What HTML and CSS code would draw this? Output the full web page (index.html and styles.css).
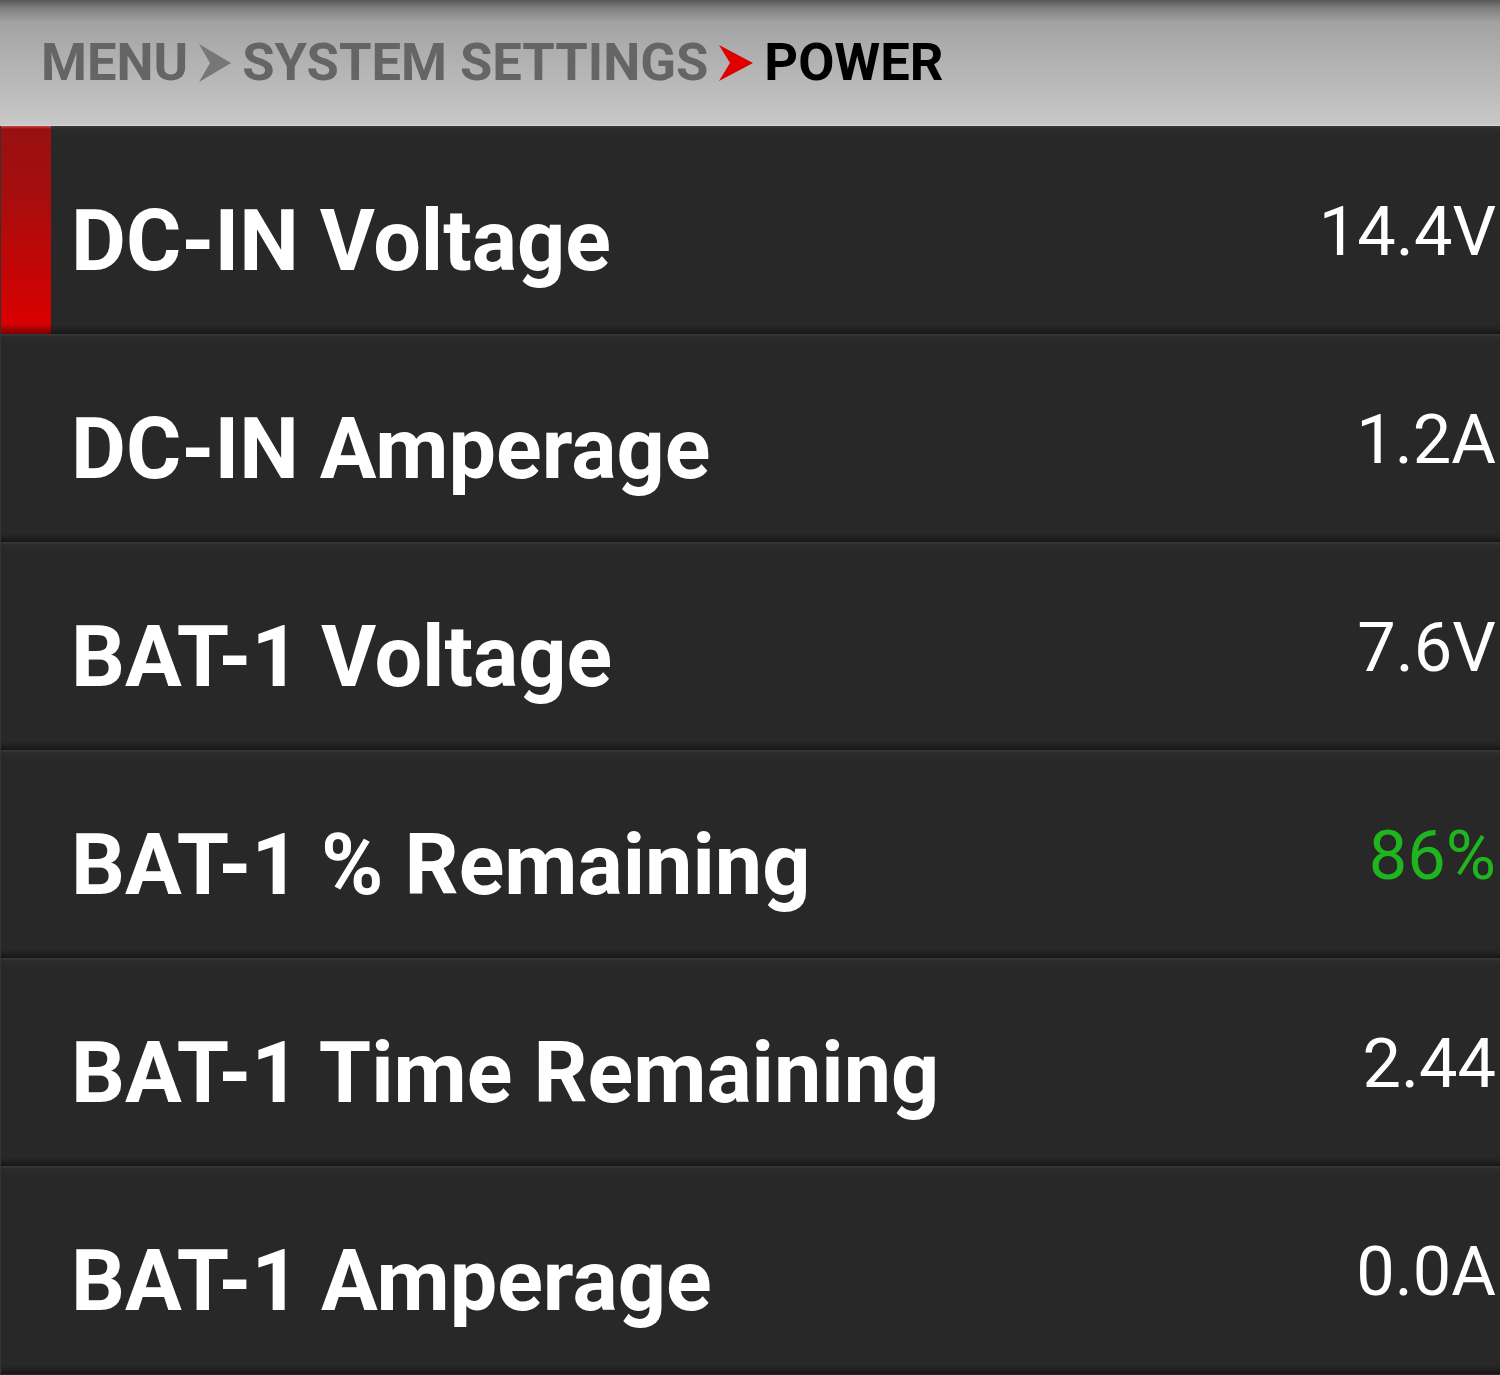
FILE: index.html
```html
<!DOCTYPE html>
<html>
	<head>
		<meta charset="utf-8">
		<meta name="viewport" content="width=device-width,initial-scale=1.0" />
		<title>Power</title>
		<link rel="stylesheet" href="styles.css">
	</head>
	<body>
		<div class="screen">
			<div class="crumbs">
				<span class="crumb">MENU</span>
				<svg class="sep" width="32" height="38" viewBox="0 0 32 38"><path d="M0 0 L32 19 L0 38 L11 19 Z" fill="#777"/></svg>
				<span class="crumb">SYSTEM SETTINGS</span>
				<svg class="sep" width="34" height="36" viewBox="0 0 34 36"><path d="M0 0 L34 18 L0 36 L11 18 Z" fill="#e00000"/></svg>
				<span class="crumb current">POWER</span>
			</div>
			<ul class="rows">
				<li class="row active"><span class="marker"></span><span class="label">DC-IN Voltage</span><span class="value">14.4V</span></li>
				<li class="row"><span class="marker"></span><span class="label">DC-IN Amperage</span><span class="value">1.2A</span></li>
				<li class="row"><span class="marker"></span><span class="label">BAT-1 Voltage</span><span class="value">7.6V</span></li>
				<li class="row"><span class="marker"></span><span class="label">BAT-1 % Remaining</span><span class="value good">86%</span></li>
				<li class="row"><span class="marker"></span><span class="label">BAT-1 Time Remaining</span><span class="value">2.44</span></li>
				<li class="row"><span class="marker"></span><span class="label">BAT-1 Amperage</span><span class="value">0.0A</span></li>
			</ul>
		</div>
	</body>
</html>
```

FILE: styles.css
```css
*{
	padding: 0;
	margin: 0;
	box-sizing: border-box;
}
body{
	background-color: #282828;
	font-family: Roboto, "Liberation Sans", sans-serif;
}
.screen{
	width: 1500px;
}
.crumbs{
	height: 126px;
	display: flex;
	align-items: center;
	gap: 11px;
	padding-left: 41px;
	border-bottom: 1px solid #d4d4d4;
	background: linear-gradient(to bottom, #575757 0, #7e7e7e 8px, #a2a2a2 22px, #acacac 45px, #bdbdbd 95px, #c8c8c8 124px);
}
.crumb{
	font-size: 52.5px;
	font-weight: 700;
	color: #656565;
	line-height: 1;
}
.crumb.current{
	color: #000;
}
.sep{
	display: block;
}
.rows{
	list-style: none;
}
.row{
	height: 208px;
	display: flex;
	align-items: center;
	padding-right: 4px;
	border-left: 1px solid #333;
	background: linear-gradient(to bottom, #3a3a3a 0, #2b2b2b 3px, #282828 10px, #282828 calc(100% - 9px), #1e1e1e calc(100% - 3px), #151515 100%);
}
.marker{
	width: 50px;
	height: 100%;
	flex-shrink: 0;
}
.row.active .marker{
	background: linear-gradient(to bottom, #c44 0, #991010 3px, #a50e0e 30%, #d80000 95%, #7a0000 100%);
}
.label{
	margin-left: 20px;
	padding-top: 24px;
	font-size: 84.5px;
	font-weight: 700;
	color: #fff;
	line-height: 1;
	flex: 1;
}
.value{
	padding-top: 4px;
	font-size: 68.5px;
	font-weight: 400;
	color: #fff;
	line-height: 1;
}
.value.good{
	color: #1fb51f;
}
```
